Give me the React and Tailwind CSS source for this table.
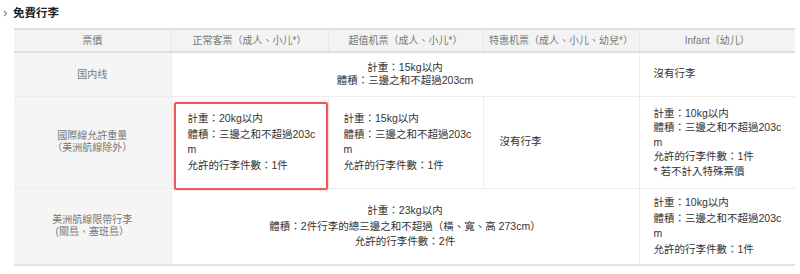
import React from "react";

const font = { fontFamily: '"Liberation Sans", "Noto Sans CJK TC", sans-serif' };

function Lines({ items, className = "" }) {
  return (
    <div className={className}>
      {items.map((t, i) => (
        <div key={i}>{t}</div>
      ))}
    </div>
  );
}

export default function App() {
  return (
    <div className="w-[800px] h-[274px] bg-white text-[#333]" style={font}>
      {/* Title */}
      <div className="flex items-center pt-[6px] pl-[3px]">
        <svg width="5" height="7" viewBox="0 0 5 7" className="mr-[5px]">
          <path d="M1 1 L3.5 3.5 L1 6" fill="none" stroke="#888" strokeWidth="1.1" />
        </svg>
        <span className="text-[11.5px] font-bold text-[#222] leading-[14px]">免費行李</span>
      </div>

      <table className="ml-[14px] mt-[8px] w-[781px] table-fixed border-collapse">
        <colgroup>
          <col className="w-[157px]" />
          <col className="w-[157px]" />
          <col className="w-[155px]" />
          <col className="w-[156px]" />
          <col className="w-[156px]" />
        </colgroup>
        <thead>
          <tr className="bg-[#f3f3f3] border-t-2 border-b-2 border-[#dedede] text-[10px] text-[#777]">
            <th className="h-[23px] font-normal text-center">票價</th>
            <th className="font-normal text-center border-l border-[#e6e6e6]">正常客票（成人、小儿*）</th>
            <th className="font-normal text-center border-l border-[#e6e6e6]">超值机票（成人、小儿*）</th>
            <th className="font-normal text-center border-l border-[#e6e6e6]">特惠机票（成人、小儿、幼兒*）</th>
            <th className="font-normal text-center border-l border-[#e6e6e6]">Infant（幼儿）</th>
          </tr>
        </thead>
        <tbody className="text-[10.5px]">
          <tr className="border-b border-[#ececec]">
            <td className="h-[44px] bg-[#f5f5f5] text-center text-[10px] text-[#777]">国内线</td>
            <td colSpan={3} className="text-center leading-[13px] border-l border-[#ececec]">
              <Lines items={["計重：15kg以内", "體積：三邊之和不超過203cm"]} />
            </td>
            <td className="pl-[14px] border-l border-[#ececec]">沒有行李</td>
          </tr>
          <tr className="border-b border-[#ececec]">
            <td className="h-[92px] bg-[#f5f5f5] text-center text-[10px] leading-[12.5px] text-[#777]">
              <Lines items={["國際線允許重量", "（美洲航線除外）"]} />
            </td>
            <td className="relative pl-[16px] pr-[8px] leading-[15.5px] break-all border-l border-[#ececec]">
              <Lines items={["計重：20kg以内", "體積：三邊之和不超過203cm", "允許的行李件數：1件"]} />
              <div className="absolute left-[2px] right-0 top-[5px] bottom-[-2px] border-2 border-[#ea5a5a] rounded-[2px] shadow-[0_0_2px_rgba(234,90,90,0.5)]" />
            </td>
            <td className="pl-[15px] pr-[8px] leading-[15.5px] break-all border-l border-[#ececec]">
              <Lines items={["計重：15kg以内", "體積：三邊之和不超過203cm", "允許的行李件數：1件"]} />
            </td>
            <td className="pl-[16px] border-l border-[#ececec]">沒有行李</td>
            <td className="pl-[14px] pr-[8px] leading-[14.5px] break-all border-l border-[#ececec]">
              <Lines items={["計重：10kg以内", "體積：三邊之和不超過203cm", "允許的行李件數：1件", "* 若不計入特殊票價"]} />
            </td>
          </tr>
          <tr className="border-b-2 border-[#e3e3e3]">
            <td className="h-[77px] bg-[#f5f5f5] text-center text-[10px] leading-[12.5px] text-[#777]">
              <Lines items={["美洲航線限帶行李", "(關島、塞班島）"]} />
            </td>
            <td colSpan={3} className="text-center leading-[15.5px] border-l border-[#ececec]">
              <Lines
                items={[
                  "計重：23kg以内",
                  "體積：2件行李的總三邊之和不超過（橫、寬、高 273cm）",
                  "允許的行李件數：2件",
                ]}
              />
            </td>
            <td className="pl-[14px] pr-[8px] leading-[15.5px] break-all border-l border-[#ececec]">
              <Lines items={["計重：10kg以内", "體積：三邊之和不超過203cm", "允許的行李件數：1件"]} />
            </td>
          </tr>
        </tbody>
      </table>
    </div>
  );
}
